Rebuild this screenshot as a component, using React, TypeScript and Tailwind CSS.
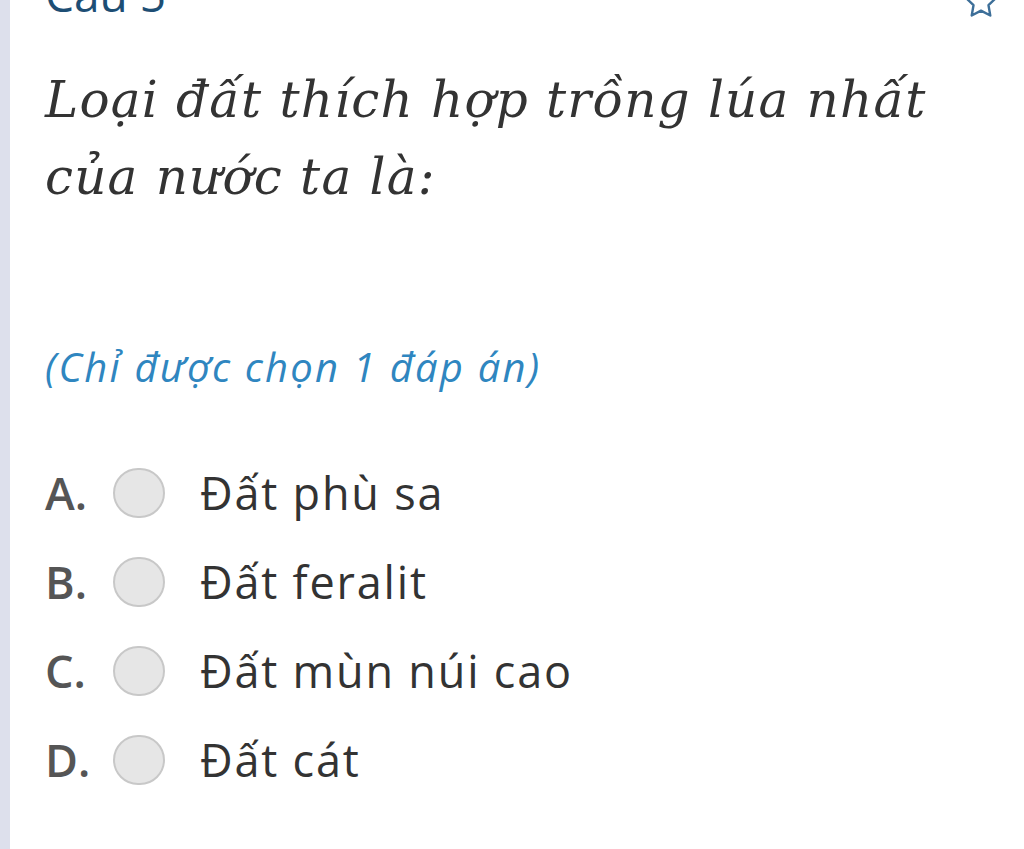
import React from "react";

const options = [
  { key: "A.", text: "Đất phù sa" },
  { key: "B.", text: "Đất feralit" },
  { key: "C.", text: "Đất mùn núi cao" },
  { key: "D.", text: "Đất cát" },
];

export default function App() {
  return (
    <div className="w-[1024px] h-[849px] overflow-hidden bg-white flex">
      <div className="w-[10px] shrink-0 bg-[#dde0ec]" />
      <div className="flex-1 pl-[35px] pr-[20px]">
        <div className="flex items-start justify-between -mt-[30px] h-[48px]">
          <div
            className="text-[46px] leading-[48px] text-[#1d4e74]"
            style={{ fontFamily: '"Open Sans", sans-serif' }}
          >
            Câu 5
          </div>
          <svg width="36" height="36" viewBox="0 0 24 24" className="mt-[14px] mr-[5px]" fill="none" stroke="#3d6f99" strokeWidth="1.6" strokeLinejoin="round">
            <path d="M12 2l3.09 6.26L22 9.27l-5 4.87 1.18 6.88L12 17.77l-6.18 3.25L7 14.14 2 9.27l6.91-1.01L12 2z" />
          </svg>
        </div>
        <div
          className="mt-[44px] text-[50px] leading-[77px] italic tracking-[1.2px] text-[#333333] w-[920px]"
          style={{ fontFamily: '"DejaVu Serif", serif' }}
        >
          Loại đất thích hợp trồng lúa nhất của nước ta là:
        </div>
        <div
          className="mt-[128px] text-[40px] leading-[46px] italic tracking-[2.2px] text-[#2f86c0]"
          style={{ fontFamily: '"Open Sans", sans-serif' }}
        >
          (Chỉ được chọn 1 đáp án)
        </div>
        <div className="mt-[77px] flex flex-col gap-[37px]" style={{ fontFamily: '"Open Sans", sans-serif' }}>
          {options.map((o) => (
            <div key={o.key} className="flex items-center h-[52px]">
              <span className="w-[68px] text-[45px] font-semibold text-[#555555]">{o.key}</span>
              <span className="w-[52px] h-[50px] rounded-full border-2 border-[#c8c8c8] bg-[#e6e6e6] shrink-0" />
              <span className="ml-[35px] text-[45px] tracking-[1.8px] text-[#333333]">{o.text}</span>
            </div>
          ))}
        </div>
      </div>
    </div>
  );
}
